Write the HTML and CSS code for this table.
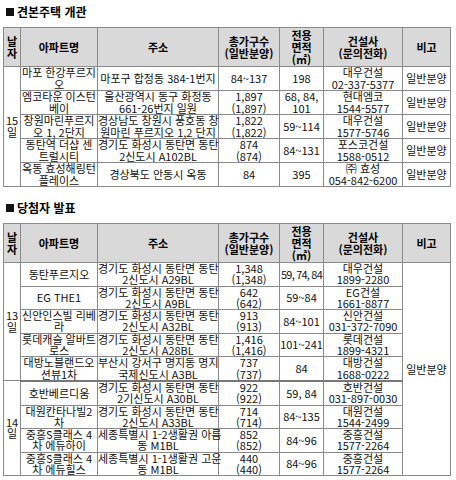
FILE: index.html
```html
<!DOCTYPE html>
<html lang="ko">
<head>
<meta charset="utf-8">
<link rel="stylesheet" href="styles.css">
</head>
<body>
<div class="page">
  <h2 class="title"><span class="sq"></span>견본주택 개관</h2>
  <table class="grid t1">
    <colgroup>
      <col class="c-date"><col class="c-name"><col class="c-addr"><col class="c-units"><col class="c-area"><col class="c-co"><col class="c-note">
    </colgroup>
    <thead>
      <tr><th>날<br>자</th><th>아파트명</th><th>주소</th><th>총가구수<br>(일반분양)</th><th>전용<br>면적<br>(㎡)</th><th>건설사<br>(문의전화)</th><th>비고</th></tr>
    </thead>
    <tbody>
      <tr><td rowspan="5">15<br>일</td><td>마포 한강푸르지<br>오</td><td>마포구 합정동 384-1번지</td><td>84~137</td><td>198</td><td>대우건설<br>02-337-5377</td><td>일반분양</td></tr>
      <tr><td>엠코타운 이스턴<br>베이</td><td>울산광역시 동구 화정동<br>661-26번지 일원</td><td>1,897<br>(1,897)</td><td>68, 84,<br>101</td><td>현대엠코<br>1544-5577</td><td>일반분양</td></tr>
      <tr><td>창원마린푸르지<br>오 1, 2단지</td><td>경상남도 창원시 풍호동 창<br>원마린 푸르지오 1,2 단지</td><td>1,822<br>(1,822)</td><td>59~114</td><td>대우건설<br>1577-5746</td><td>일반분양</td></tr>
      <tr><td>동탄역 더샵 센<br>트럴시티</td><td>경기도 화성시 동탄면 동탄<br>2신도시 A102BL</td><td>874<br>(874)</td><td>84~131</td><td>포스코건설<br>1588-0512</td><td>일반분양</td></tr>
      <tr><td>옥동 효성해링턴<br>플레이스</td><td>경상북도 안동시 옥동</td><td>84</td><td>395</td><td>㈜ 효성<br>054-842-6200</td><td>일반분양</td></tr>
    </tbody>
  </table>

  <h2 class="title second"><span class="sq"></span>당첨자 발표</h2>
  <table class="grid t2">
    <colgroup>
      <col class="c-date"><col class="c-name"><col class="c-addr"><col class="c-units"><col class="c-area"><col class="c-co"><col class="c-note">
    </colgroup>
    <thead>
      <tr><th>날<br>자</th><th>아파트명</th><th>주소</th><th>총가구수<br>(일반분양)</th><th>전용<br>면적<br>(㎡)</th><th>건설사<br>(문의전화)</th><th>비고</th></tr>
    </thead>
    <tbody>
      <tr><td rowspan="5">13<br>일</td><td>동탄푸르지오</td><td>경기도 화성시 동탄면 동탄<br>2신도시 A29BL</td><td>1,348<br>(1,348)</td><td class="tight">59, 74, 84</td><td>대우건설<br>1899-2280</td><td rowspan="9">일반분양</td></tr>
      <tr><td>EG THE1</td><td>경기도 화성시 동탄면 동탄<br>2신도시 A9BL</td><td>642<br>(642)</td><td>59~84</td><td>EG건설<br>1661-8877</td></tr>
      <tr><td>신안인스빌 리베<br>라</td><td>경기도 화성시 동탄면 동탄<br>2신도시 A32BL</td><td>913<br>(913)</td><td>84~101</td><td>신안건설<br>031-372-7090</td></tr>
      <tr><td>롯데캐슬 알바트<br>로스</td><td>경기도 화성시 동탄면 동탄<br>2신도시 A28BL</td><td>1,416<br>(1,416)</td><td>101~241</td><td>롯데건설<br>1899-4321</td></tr>
      <tr class="group-end"><td>대방노블랜드오<br>션뷰1차</td><td>부산시 강서구 명지동 명지<br>국제신도시 A3BL</td><td>737<br>(737)</td><td>84</td><td>대방건설<br>1688-0222</td></tr>
      <tr><td rowspan="4">14<br>일</td><td>호반베르디움</td><td>경기도 화성시 동탄면 동탄<br>2기신도시 A30BL</td><td>922<br>(922)</td><td>59, 84</td><td>호반건설<br>031-897-0030</td></tr>
      <tr><td>대원칸타나빌2<br>차</td><td>경기도 화성시 동탄면 동탄<br>2신도시 A33BL</td><td>714<br>(714)</td><td>84~135</td><td>대원건설<br>1544-2499</td></tr>
      <tr><td>중흥S클래스 4<br>차 에듀하이</td><td>세종특별시 1-2생활권 아름<br>동 M1BL</td><td>852<br>(852)</td><td>84~96</td><td>중흥건설<br>1577-2264</td></tr>
      <tr><td>중흥S클래스 4<br>차 에듀힐스</td><td>세종특별시 1-1생활권 고운<br>동 M1BL</td><td>440<br>(440)</td><td>84~96</td><td>중흥건설<br>1577-2264</td></tr>
    </tbody>
  </table>
</div>
</body>
</html>
```
FILE: styles.css
```css
html, body {
  margin: 0;
  padding: 0;
  background: #fff;
}
body {
  font-family: "Noto Sans CJK KR", "Noto Sans", sans-serif;
  color: #111;
  font-size: 11px;
}
.page {
  padding: 6px 0 0 3px;
}
.title {
  margin: 0;
  display: flex;
  align-items: center;
  gap: 3px;
  padding-left: 3px;
  font-size: 12px;
  line-height: 12px;
  font-weight: bold;
  color: #000;
}
.title.second {
  margin-top: 15px;
}
.sq {
  display: inline-block;
  width: 8px;
  height: 8px;
  background: #111;
}
.grid {
  margin-top: 9px;
  border-collapse: collapse;
  table-layout: fixed;
  width: 448px;
  border: 1px solid #8a8a8a;
}
.c-date { width: 17px; }
.c-name { width: 77px; }
.c-addr { width: 121px; }
.c-units { width: 61px; }
.c-area { width: 44px; }
.c-co { width: 79px; }
.c-note { width: 48px; }
.grid th, .grid td {
  border: 1px solid #8a8a8a;
  text-align: center;
  vertical-align: middle;
  white-space: nowrap;
  overflow: visible;
  padding: 0;
  line-height: 11.5px;
  font-weight: normal;
}
.grid th {
  background: #d9d9d9;
  font-weight: bold;
  line-height: 12px;
  padding: 1px 0 1px;
  color: #000;
}
.t2 td {
  line-height: 11.3px;
}
.grid tr.group-end td {
  border-bottom: 2px solid #777;
}
.tight {
  letter-spacing: -0.8px;
}
```
